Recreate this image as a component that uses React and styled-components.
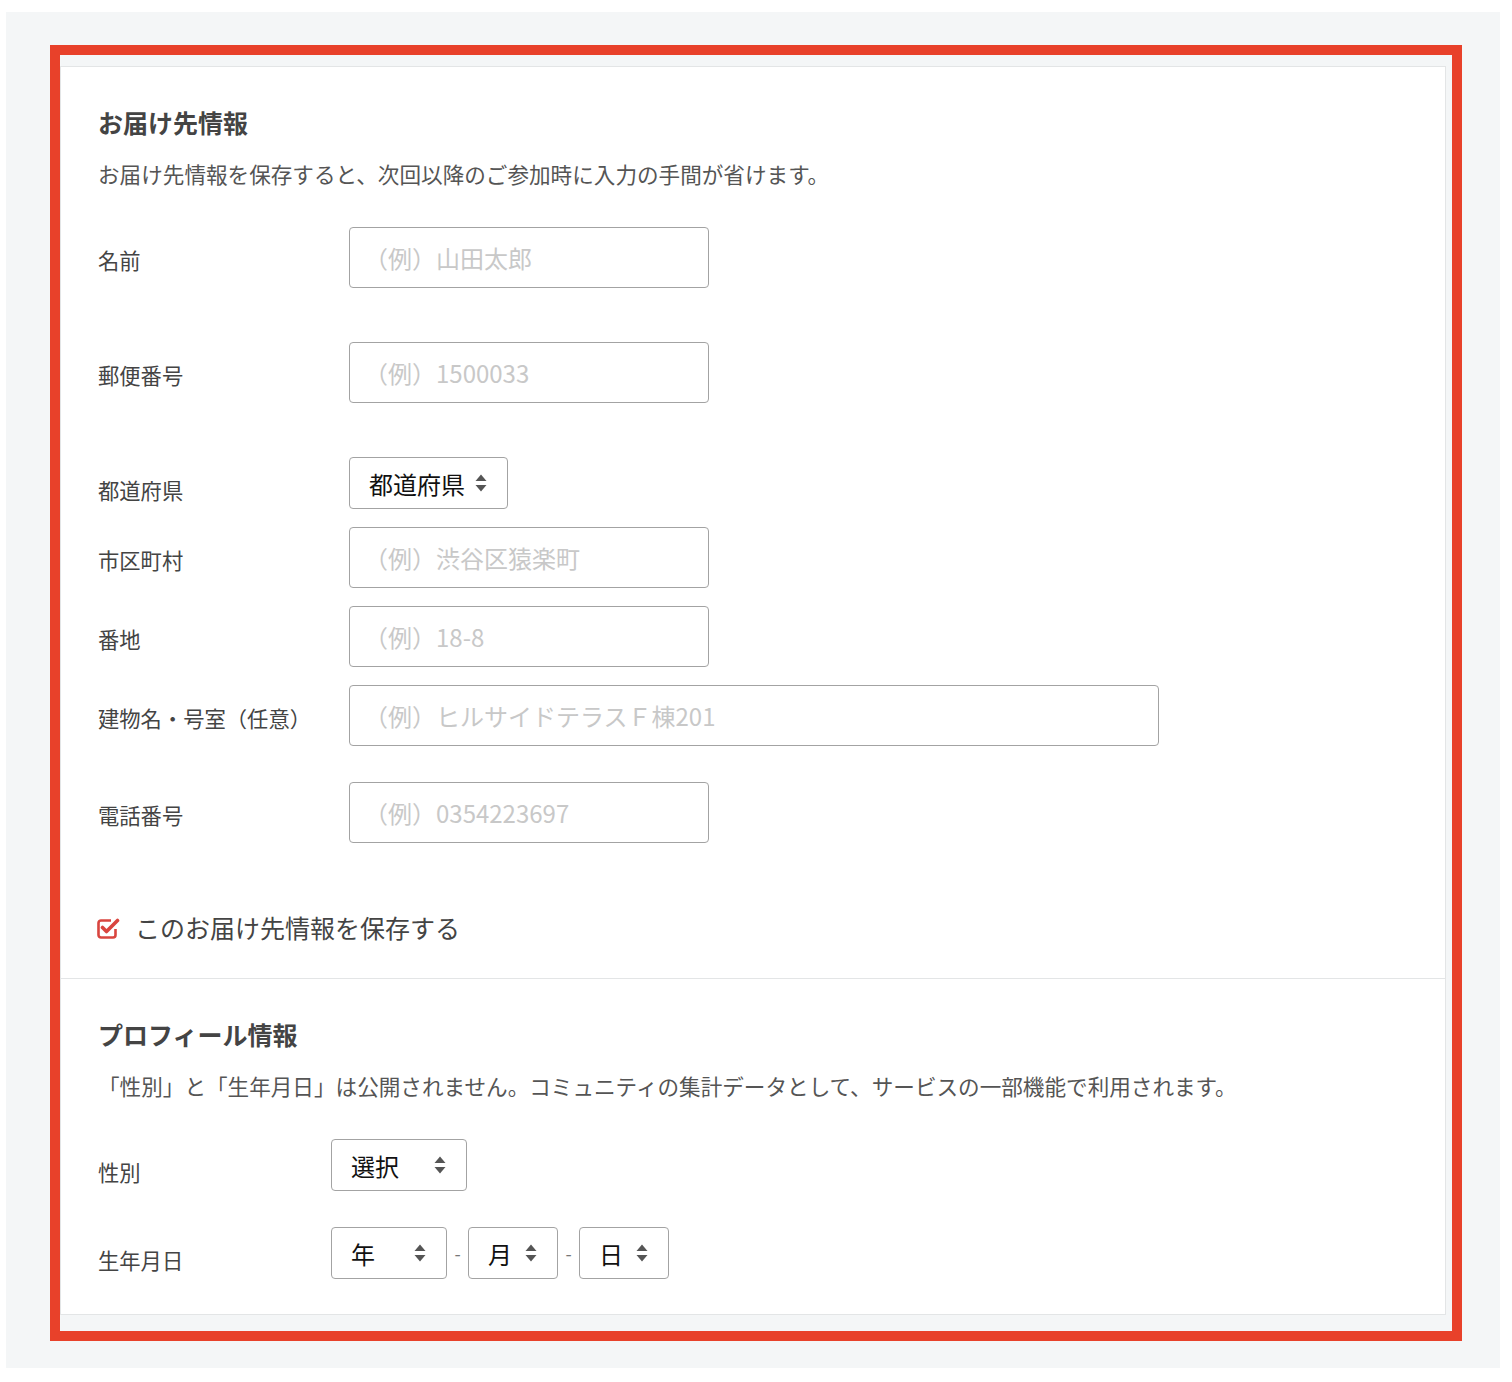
import React from "react";
import styled, { createGlobalStyle } from "styled-components";

const GlobalStyle = createGlobalStyle`
  body {
    margin: 0;
    background: #ffffff;
    font-family: "Noto Sans CJK JP", "Noto Sans", sans-serif;
    color: #444;
  }
`;

const Page = styled.div`
  padding: 12px 12px 14px 6px;
`;

const Backdrop = styled.div`
  background: #f4f6f7;
  padding: 33px 38px 27px 44px;
`;

const Highlight = styled.div`
  border: 10px solid #e8412a;
  padding: 11px 6px 16px 0;
`;

const Card = styled.div`
  background: #fff;
  border: 1px solid #e3e5e6;
`;

const Section = styled.section`
  padding: ${(p) => p.$pad || "37px 37px 32px"};
  & + & {
    border-top: 1px solid #e3e5e6;
  }
`;

const Title = styled.h2`
  margin: 0;
  font-size: 25px;
  line-height: 37px;
  font-weight: 700;
  color: #444;
`;

const Description = styled.p`
  margin: 17px 0 ${(p) => p.$after ?? 36}px;
  font-size: 21.6px;
  line-height: 32px;
  color: #555;
`;

const Row = styled.div`
  display: grid;
  grid-template-columns: ${(p) => p.$labelWidth || 251}px 1fr;
  align-items: start;
  margin-bottom: ${(p) => p.$gap ?? 18}px;
`;

const Label = styled.div`
  padding-top: 17px;
  font-size: 21.3px;
  line-height: 32px;
  color: #444;
  white-space: nowrap;
`;

const TextInput = styled.input`
  box-sizing: border-box;
  width: ${(p) => p.$width || 360}px;
  height: 61px;
  padding: 0 14px;
  border: 1px solid #a3a3a3;
  border-radius: 4px;
  font-family: inherit;
  font-size: 24px;
  color: #333;
  outline: none;
  &::placeholder {
    color: #c8c8c8;
  }
`;

const SelectRow = styled.div`
  display: flex;
  align-items: center;
`;

const SelectBox = styled.div`
  box-sizing: border-box;
  display: flex;
  align-items: center;
  justify-content: space-between;
  width: ${(p) => p.$width}px;
  height: 52px;
  padding: 0 20px 0 19px;
  border: 1px solid #a3a3a3;
  border-radius: 4px;
  font-size: 24px;
  color: #111;
  background: #fff;
`;

const Dash = styled.span`
  width: 21px;
  text-align: center;
  font-size: 18px;
  color: #777;
`;

const CheckRow = styled.label`
  display: flex;
  align-items: center;
  gap: 15px;
  margin-top: 66px;
  margin-left: -2px;
  font-size: 25px;
  line-height: 37px;
  color: #444;
`;

const Arrows = () => (
  <svg width="12" height="18" viewBox="0 0 12 18">
    <path d="M6 0.5 L11.5 7 H0.5 Z" fill="#555" />
    <path d="M6 17.5 L11.5 11 H0.5 Z" fill="#555" />
  </svg>
);

const CheckIcon = () => (
  <svg width="24" height="24" viewBox="0 0 24 24">
    <path
      d="M15 4.5 H5 a2.5 2.5 0 0 0 -2.5 2.5 v12 a2.5 2.5 0 0 0 2.5 2.5 h12 a2.5 2.5 0 0 0 2.5 -2.5 v-6"
      fill="none"
      stroke="#d9453f"
      strokeWidth="2.6"
    />
    <path
      d="M6.5 11.5 L10.5 15.5 L21.5 4.5"
      fill="none"
      stroke="#d9453f"
      strokeWidth="3.6"
      strokeLinecap="round"
      strokeLinejoin="round"
    />
  </svg>
);

const Select = ({ width, children }) => (
  <SelectBox $width={width}>
    <span>{children}</span>
    <Arrows />
  </SelectBox>
);

const App = () => {
  return (
    <Page>
      <GlobalStyle />
      <Backdrop>
        <Highlight>
          <Card>
            <Section>
              <Title>お届け先情報</Title>
              <Description $after={37}>
                お届け先情報を保存すると、次回以降のご参加時に入力の手間が省けます。
              </Description>

              <Row $gap={54}>
                <Label>名前</Label>
                <TextInput placeholder="（例）山田太郎" />
              </Row>
              <Row $gap={54}>
                <Label>郵便番号</Label>
                <TextInput placeholder="（例）1500033" />
              </Row>
              <Row>
                <Label>都道府県</Label>
                <Select width={159}>都道府県</Select>
              </Row>
              <Row>
                <Label>市区町村</Label>
                <TextInput placeholder="（例）渋谷区猿楽町" />
              </Row>
              <Row>
                <Label>番地</Label>
                <TextInput placeholder="（例）18-8" />
              </Row>
              <Row $gap={36}>
                <Label>建物名・号室（任意）</Label>
                <TextInput $width={810} placeholder="（例）ヒルサイドテラスＦ棟201" />
              </Row>
              <Row $gap={0}>
                <Label>電話番号</Label>
                <TextInput placeholder="（例）0354223697" />
              </Row>

              <CheckRow>
                <CheckIcon />
                このお届け先情報を保存する
              </CheckRow>
            </Section>

            <Section $pad="37px 37px 35px">
              <Title>プロフィール情報</Title>
              <Description $after={37}>
                「性別」と「生年月日」は公開されません。コミュニティの集計データとして、サービスの一部機能で利用されます。
              </Description>
              <Row $labelWidth={233} $gap={36}>
                <Label>性別</Label>
                <Select width={136}>選択</Select>
              </Row>
              <Row $labelWidth={233} $gap={0}>
                <Label>生年月日</Label>
                <SelectRow>
                  <Select width={116}>年</Select>
                  <Dash>-</Dash>
                  <Select width={90}>月</Select>
                  <Dash>-</Dash>
                  <Select width={90}>日</Select>
                </SelectRow>
              </Row>
            </Section>
          </Card>
        </Highlight>
      </Backdrop>
    </Page>
  );
};

export default App;
